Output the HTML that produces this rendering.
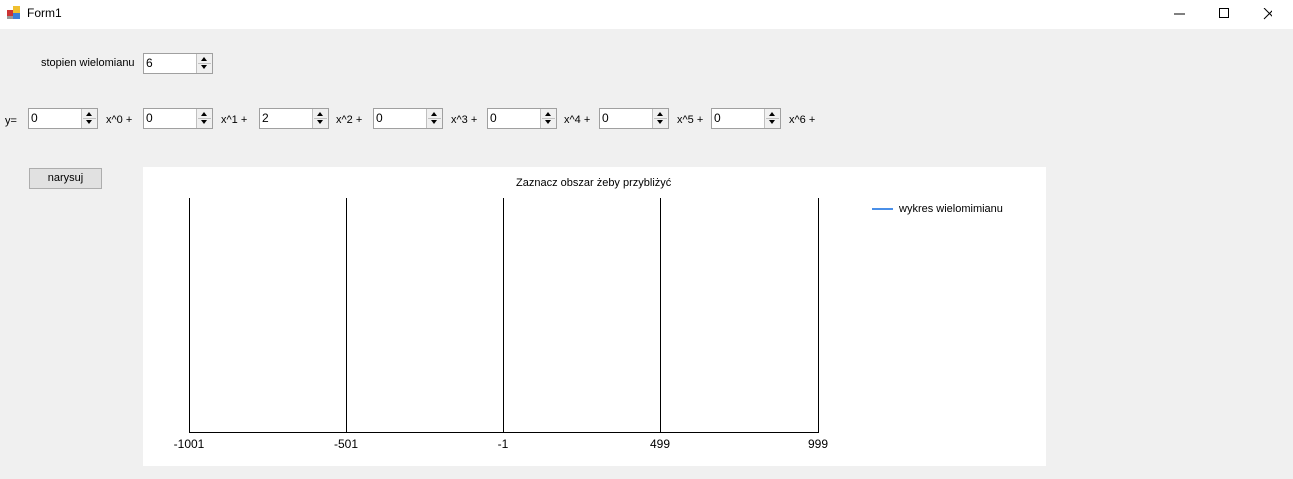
<!DOCTYPE html>
<html><head><style>
body{margin:0;width:1293px;height:479px;background:#f0f0f0;font-family:"Liberation Sans",sans-serif;font-size:11px;color:#000;position:relative;overflow:hidden}
.a{position:absolute}
.t{position:absolute;white-space:nowrap}
.spin{position:absolute;width:68px;height:19px;border:1px solid #a0a0a0;background:#fff}
.spin span{position:absolute;left:2px;top:2px;font-size:12px}
.spin .b{position:absolute;right:0;top:0;width:15px;height:19px;border-left:1px solid #c0c0c0;background:#f0f0f0}
.spin .b:before{content:"";position:absolute;left:4px;top:3px;border:3px solid transparent;border-bottom:4px solid #000;border-top:0}
.spin .b:after{content:"";position:absolute;left:4px;top:11px;border:3px solid transparent;border-top:4px solid #000;border-bottom:0}
.spin .b i{position:absolute;left:1px;right:1px;top:9px;height:1px;background:#c0c0c0}
.v{position:absolute;top:198px;width:1px;height:234px;background:#000}
.xl{position:absolute;top:437px;font-size:12px;transform:translateX(-50%)}
</style></head><body>
<div class="a" style="left:0;top:0;width:1293px;height:29px;background:#fff"></div>
<svg class="a" style="left:7px;top:6px" width="14" height="14"><rect x="0" y="4" width="6" height="6" fill="#c33"/><rect x="6" y="0" width="7" height="7" fill="#f0c030"/><rect x="6" y="7" width="7" height="6" fill="#3a7fd8"/><rect x="0" y="10" width="6" height="3" fill="#999"/></svg>
<div class="t" style="left:27px;top:6px;font-size:12px">Form1</div>
<svg class="a" style="left:1172px;top:8px" width="100" height="12"><line x1="2" y1="6" x2="13" y2="6" stroke="#000"/><rect x="47.5" y="0.5" width="9" height="9" fill="none" stroke="#000"/><line x1="92" y1="0" x2="103" y2="11" stroke="#000"/><line x1="103" y1="0" x2="92" y2="11" stroke="#000"/></svg>

<div class="t" style="left:41px;top:57px">stopien wielomianu</div>
<div class="spin" style="left:143px;top:53px"><span>6</span><div class="b"><i></i></div></div>

<div class="t" style="left:5px;top:115px">y=</div>
<div class="spin" style="left:28px;top:108px"><span>0</span><div class="b"><i></i></div></div>
<div class="t" style="left:106px;top:114px">x^0 +</div>
<div class="spin" style="left:143px;top:108px"><span>0</span><div class="b"><i></i></div></div>
<div class="t" style="left:221px;top:114px">x^1 +</div>
<div class="spin" style="left:259px;top:108px"><span>2</span><div class="b"><i></i></div></div>
<div class="t" style="left:336px;top:114px">x^2 +</div>
<div class="spin" style="left:373px;top:108px"><span>0</span><div class="b"><i></i></div></div>
<div class="t" style="left:451px;top:114px">x^3 +</div>
<div class="spin" style="left:487px;top:108px"><span>0</span><div class="b"><i></i></div></div>
<div class="t" style="left:564px;top:114px">x^4 +</div>
<div class="spin" style="left:599px;top:108px"><span>0</span><div class="b"><i></i></div></div>
<div class="t" style="left:677px;top:114px">x^5 +</div>
<div class="spin" style="left:711px;top:108px"><span>0</span><div class="b"><i></i></div></div>
<div class="t" style="left:789px;top:114px">x^6 +</div>

<div class="a" style="left:29px;top:168px;width:71px;height:19px;border:1px solid #adadad;background:#e1e1e1;text-align:center;line-height:19px">narysuj</div>

<div class="a" style="left:143px;top:167px;width:903px;height:299px;background:#fff"></div>
<div class="t" style="left:516px;top:177px">Zaznacz obszar żeby przybliżyć</div>
<div class="v" style="left:189px"></div>
<div class="v" style="left:346px"></div>
<div class="v" style="left:503px"></div>
<div class="v" style="left:660px"></div>
<div class="v" style="left:818px"></div>
<div class="a" style="left:189px;top:432px;width:630px;height:1px;background:#000"></div>
<div class="xl" style="left:189px">-1001</div>
<div class="xl" style="left:346px">-501</div>
<div class="xl" style="left:503px">-1</div>
<div class="xl" style="left:660px">499</div>
<div class="xl" style="left:818px">999</div>
<div class="a" style="left:872px;top:208px;width:21px;height:2px;background:#4a8fe8"></div>
<div class="t" style="left:899px;top:203px">wykres wielomimianu</div>
</body></html>
